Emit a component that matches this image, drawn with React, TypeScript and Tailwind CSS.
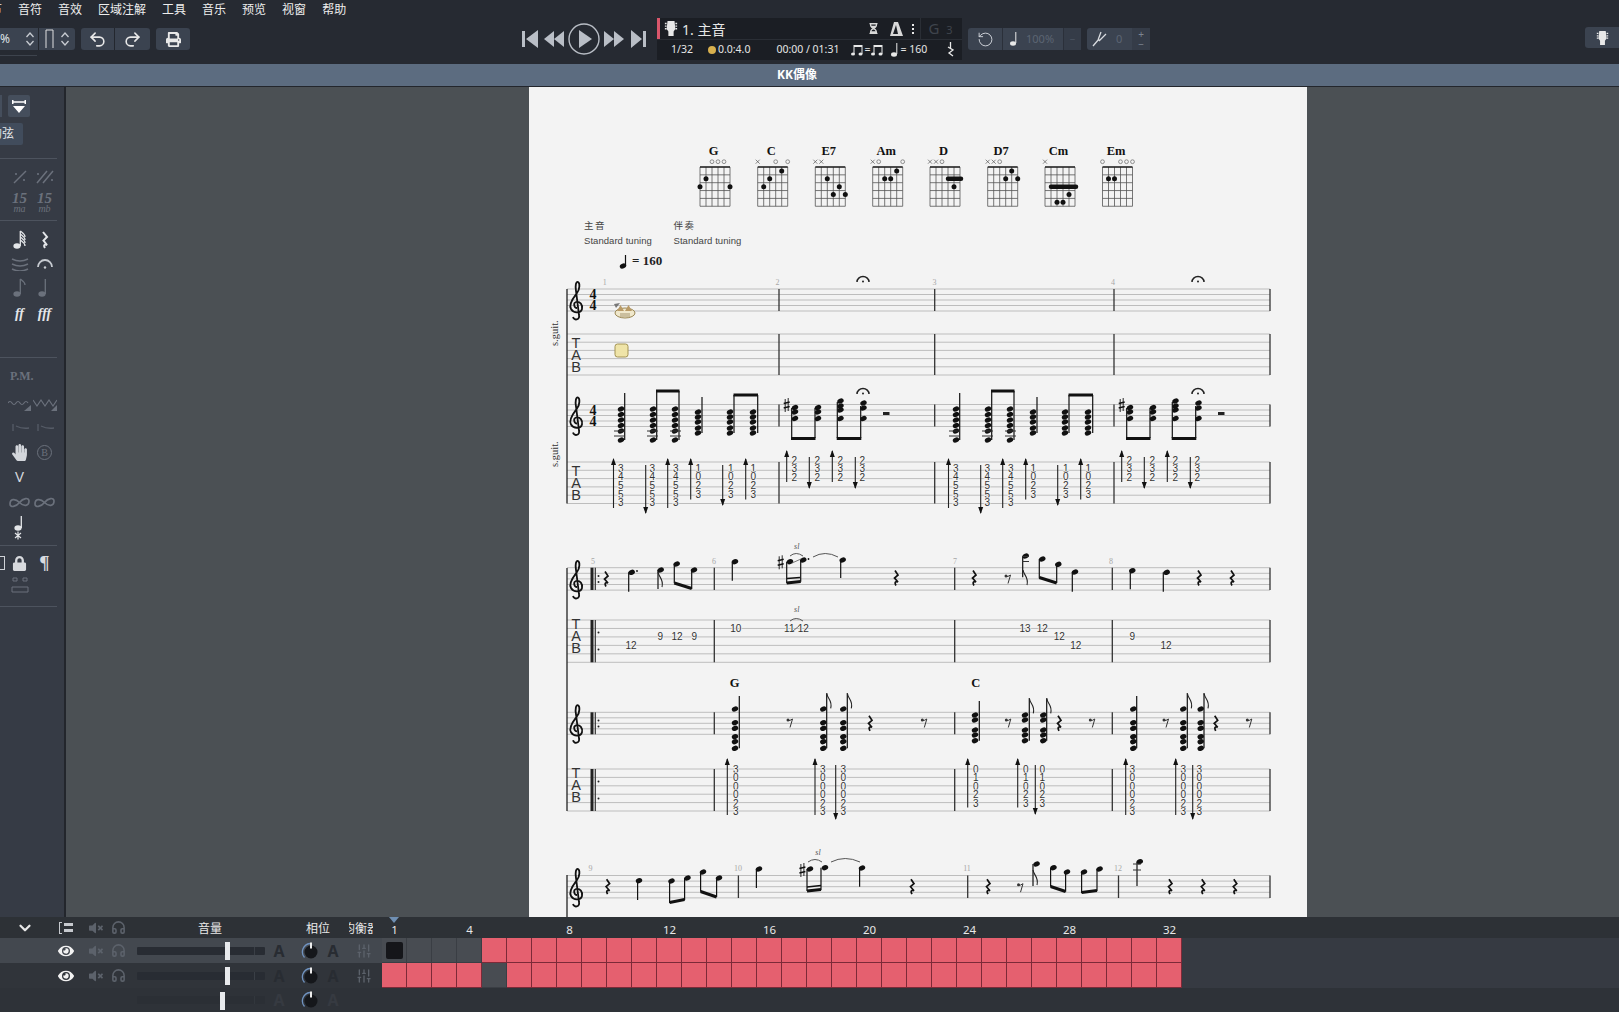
import { ChevronDown, Headphones, Redo2, RotateCcw, SlidersVertical, Undo2 } from "lucide-react";
import { FaEye, FaHandPaper, FaHourglassHalf, FaLock, FaPrint, FaVolumeMute } from "react-icons/fa";

const PAGE = "#f3f3f3";
const menus = ["小节", "音符", "音效", "区域注解", "工具", "音乐", "预览", "视窗", "帮助"];

function GuitarHead({ size = 16, color = "#e8e8e8" }: { size?: number; color?: string }) {
  return (
    <svg width={size} height={size + 3} viewBox="0 0 16 19" fill={color}>
      <path d="M4 1h8l1 9-2 3v5H5v-5l-2-3z" />
      <path d="M1 3h2v1.500H1zM1 6h2v1.500H1zM1 9h2v1.500H1zM13 3h2v1.500h-2zM13 6h2v1.500h-2zM13 9h2v1.500h-2z" />
    </svg>
  );
}

function Stepper() {
  return (
    <svg width="10" height="16" viewBox="0 0 10 16" fill="none" stroke="#c8ccd2" strokeWidth="1.300">
      <path d="M1.500 6L5 2l3.500 4M1.500 10L5 14l3.500-4" />
    </svg>
  );
}

function Transport() {
  const c = "#b9bec6";
  return (
    <div className="flex items-center">
      <svg width="16" height="18" viewBox="0 0 16 18" fill={c}>
        <path d="M0 1h3v16H0zM16 0v18L4 9z" />
      </svg>
      <svg className="ml-[6px]" width="20" height="16" viewBox="0 0 20 16" fill={c}>
        <path d="M10 0v16L0 8zM20 0v16L10 8z" />
      </svg>
      <svg className="ml-[4px]" width="32" height="32" viewBox="0 0 32 32">
        <circle cx="16" cy="16" r="15" fill="none" stroke={c} strokeWidth="1.400" />
        <path d="M11 7l13 9-13 9z" fill={c} />
      </svg>
      <svg className="ml-[4px]" width="20" height="16" viewBox="0 0 20 16" fill={c}>
        <path d="M0 0v16L10 8zM10 0v16L20 8z" />
      </svg>
      <svg className="ml-[7px]" width="15" height="18" viewBox="0 0 15 18" fill={c}>
        <path d="M0 0v18L11 9zM12 1h3v16h-3z" />
      </svg>
    </div>
  );
}

function MiniNote({ up = true, color = "#e8e8e8" }: { up?: boolean; color?: string }) {
  return (
    <svg width="8" height="14" viewBox="0 0 8 14" fill={color}>
      <ellipse cx="3" cy={up ? 11.500 : 3} rx="3" ry="2.200" />
      <rect x="5.300" y="0" width="1" height="11" />
    </svg>
  );
}

function BeamNotes() {
  return (
    <svg width="12" height="12" viewBox="0 0 12 12" fill="#e8e8e8">
      <path d="M2.500 1h9v2h-8v7h-1zM10.500 2h1v8h-1z" />
      <ellipse cx="2" cy="10" rx="2" ry="1.600" />
      <ellipse cx="9.500" cy="10" rx="2" ry="1.600" />
    </svg>
  );
}

function InfoPanel() {
  return (
    <div className="flex h-[42px] w-[305px] flex-col bg-[#1b1e24] text-[#e6e6e6]">
      <div className="flex h-[22px] items-center border-b border-[#2a2e35]">
        <div className="h-full w-[3px] bg-[#d9566b]" />
        <div className="ml-[4px]">
          <GuitarHead size={14} />
        </div>
        <span className="ml-[4px] pt-[2px] text-[14px]">1. 主音</span>
        <span className="ml-[143px] text-[#d8d8d8]">
          <FaHourglassHalf size={11} />
        </span>
        <svg className="ml-[11px]" width="13" height="14" viewBox="0 0 13 14" fill="#d8d8d8">
          <path d="M4 0h4l5 14H0zM3 12h5L6 3z" fillRule="evenodd" />
        </svg>
        <div className="ml-[9px] flex flex-col gap-[2px]">
          <div className="size-[2px] bg-[#e8e8e8]" />
          <div className="size-[2px] bg-[#e8e8e8]" />
          <div className="size-[2px] bg-[#e8e8e8]" />
        </div>
        <div className="ml-[6px] h-full w-px bg-[#2a2e35]" />
        <span className="ml-[7px] text-[15px] tracking-[2px] text-[#3f444c]">
          G<span className="text-[11px]"> 3</span>
        </span>
      </div>
      <div className="flex h-[20px] items-center text-[10.500px]">
        <span className="ml-[14px]">1/32</span>
        <div className="ml-[15px] size-[8px] rounded-full bg-[#d8b04e]" />
        <span className="ml-[2px]">0.0:4.0</span>
        <span className="ml-[26px]">00:00 / 01:31</span>
        <div className="ml-[12px]">
          <BeamNotes />
        </div>
        <span className="mx-[1px]">=</span>
        <BeamNotes />
        <div className="ml-[8px]">
          <MiniNote />
        </div>
        <span className="ml-[1px]">= 160</span>
        <svg className="ml-[20px]" width="7" height="16" viewBox="0 0 7 16" fill="none" stroke="#e8e8e8">
          <path d="M3.500 0v6M1 5l5 3-4 3 4 3" strokeWidth="1.300" />
        </svg>
      </div>
    </div>
  );
}

function Toolbar() {
  return (
    <div className="mt-[9px] flex">
      <div className="flex h-[22px] w-[75px] items-center rounded-r-[3px] bg-[#3b4350] text-[12px] text-[#dfe2e6]">
        <span className="w-[10px] shrink-0">%</span>
        <div className="ml-[15px]">
          <Stepper />
        </div>
        <div className="ml-[3px] h-full w-px bg-[#23272e]" />
        <svg className="ml-[6px]" width="9" height="20" viewBox="0 0 9 20" fill="none" stroke="#e0e0e0">
          <path d="M1 19V1h7v18" />
        </svg>
        <div className="ml-[6px]">
          <Stepper />
        </div>
      </div>
      <div className="ml-[6px] flex h-[22px] w-[69px] items-center rounded-[3px] bg-[#3b4350] text-[#e8e8e8]">
        <div className="flex h-full w-[34px] items-center justify-center border-r border-[#23272e]">
          <Undo2 size={19} strokeWidth={2} />
        </div>
        <div className="flex h-full flex-1 items-center justify-center">
          <Redo2 size={19} strokeWidth={2} />
        </div>
      </div>
      <div className="ml-[6px] flex h-[22px] w-[34px] items-center justify-center rounded-[3px] bg-[#3b4350] text-[#e8e8e8]">
        <FaPrint size={15} />
      </div>
    </div>
  );
}

function Header() {
  return (
    <div className="flex h-[64px] bg-[#262a32] text-white">
      <div className="flex w-[522px] shrink-0 flex-col">
        <div className="-ml-[22px] flex h-[19px] items-center gap-4 text-[12px] text-[#eeeeee]">
          {menus.map((m) => (
            <span key={m}>{m}</span>
          ))}
        </div>
        <Toolbar />
        <div className="mt-[5px] h-px w-[37px] bg-[#3d434d]" />
      </div>
      <div className="mt-[18px] flex h-[42px] flex-1 items-center">
        <Transport />
        <div className="ml-[11px]">
          <InfoPanel />
        </div>
        <div className="ml-[6px] flex h-[22px] w-[113px] items-center rounded-[3px] bg-[#3b4350]">
          <div className="flex h-full w-[35px] items-center justify-center border-r border-[#2b303a] text-[#d4d8de]">
            <RotateCcw size={17} strokeWidth={1.300} />
          </div>
          <div className="ml-[7px]">
            <MiniNote />
          </div>
          <span className="ml-[8px] text-[11px] text-[#5c6573]">100%</span>
          <div className="ml-[9px] flex h-full flex-1 items-center justify-center border-l border-[#2b303a] bg-[#353c48] text-[10px] text-[#4e5663]">
            −
          </div>
        </div>
        <div className="ml-[6px] flex h-[22px] w-[63px] items-center rounded-[3px] bg-[#3b4350]">
          <svg className="ml-[5px]" width="15" height="16" viewBox="0 0 15 16" fill="none" stroke="#d9dce0" strokeWidth="1.300">
            <path d="M1 15l6-7M6 9L9 1M7 10l7-7" />
          </svg>
          <span className="ml-[9px] text-[11px] text-[#5c6573]">0</span>
          <div className="ml-[10px] flex h-full flex-1 flex-col items-center justify-center bg-[#353c48] text-[10px] leading-[10px] text-[#7d8591]">
            <span>+</span>
            <span>−</span>
          </div>
        </div>
        <div className="ml-auto -mt-[3px] flex h-[21px] w-[34px] items-center justify-center rounded-l-[3px] bg-[#3b4350]">
          <GuitarHead size={13} />
        </div>
      </div>
    </div>
  );
}

function SideRow({ h = 24, mt = 0, children }: { h?: number; mt?: number; children: React.ReactNode }) {
  return (
    <div className="-ml-[18px] flex items-center" style={{ height: h, marginTop: mt }}>
      {children}
    </div>
  );
}

function Cell({ children, className = "" }: { children?: React.ReactNode; className?: string }) {
  return <div className={`flex w-[25px] shrink-0 items-center justify-center ${className}`}>{children}</div>;
}

function Sep({ mt }: { mt: number }) {
  return <div className="h-px w-[57px] shrink-0 bg-[#4d535e]" style={{ marginTop: mt }} />;
}

const dim = "#6b717c";

function NoteGlyph({ color = "#e4e6e9", flags = 0 }: { color?: string; flags?: number }) {
  return (
    <svg width="14" height="20" viewBox="0 0 14 20" fill={color} stroke={color}>
      <ellipse cx="4" cy="16" rx="3.600" ry="2.700" stroke="none" />
      <path d="M7.300 16V1" strokeWidth="1.300" />
      {Array.from({ length: flags }).map((_, i) => (
        <path key={i} d={`M7.300 ${1 + i * 3}C10 ${3 + i * 3} 12 ${4 + i * 3} 12 ${7 + i * 3}`} fill="none" strokeWidth="1.300" />
      ))}
    </svg>
  );
}

function StarNote() {
  return (
    <svg width="14" height="24" viewBox="0 0 14 24" fill="#e4e6e9" stroke="#e4e6e9">
      <ellipse cx="5" cy="12" rx="3.600" ry="2.700" stroke="none" />
      <path d="M8.300 12V0" strokeWidth="1.300" />
      <path d="M2 17l6 5M8 17l-6 5M5 15.500v8" fill="none" strokeWidth="1.200" />
    </svg>
  );
}

function RestGlyph({ color = "#e4e6e9" }: { color?: string }) {
  return (
    <svg width="8" height="18" viewBox="0 0 8 18" fill="none" stroke={color} strokeWidth="2">
      <path d="M2 1l4 5-3.500 3.500L6 14c-2-1-4 0-2 3" />
    </svg>
  );
}

function Loops() {
  return (
    <svg width="21" height="11" viewBox="0 0 21 11" fill="none" stroke={dim} strokeWidth="1.700">
      <path d="M1 7C1 2 6 1 10.500 5.500S20 9 20 4" />
      <path d="M1 7c0 4 6 3 9.500-1.500S20 0 20 4" />
    </svg>
  );
}

function Sidebar() {
  return (
    <div className="flex w-[66px] shrink-0 flex-col overflow-hidden border-r-2 border-[#23262c] bg-[#363b45] text-[#e4e6e9]">
      <div className="mt-[8px] flex h-[22px]">
        <div className="h-full w-[2px] bg-[#454e5c]" />
        <div className="ml-[6px] flex h-full w-[22px] items-center justify-center rounded-[2px] bg-[#454e5c]">
          <svg width="16" height="15" viewBox="0 0 16 15" fill="white">
            <path d="M1 1h1.500v4H1zM13.500 1H15v4h-1.500zM2.500 2.300h11v1.400h-11zM2 7h12l-6 7z" />
          </svg>
        </div>
      </div>
      <div className="mt-[6px] flex h-[22px] w-[23px] items-center justify-end overflow-hidden rounded-r-[2px] bg-[#414c5c] pr-[9px] text-[12px]">
        <span className="shrink-0">的弦</span>
      </div>
      <Sep mt={13} />
      <SideRow h={20} mt={8}>
        <Cell />
        <Cell>
          <svg width="18" height="14" viewBox="0 0 18 14" fill={dim} stroke={dim}>
            <path d="M3 13L15 1" strokeWidth="1.500" />
            <circle cx="5" cy="4" r="1.100" stroke="none" />
            <circle cx="13" cy="10" r="1.100" stroke="none" />
          </svg>
        </Cell>
        <Cell>
          <svg width="22" height="14" viewBox="0 0 22 14" fill={dim} stroke={dim}>
            <path d="M3 13L13 1M9 13L19 1" strokeWidth="1.500" />
            <circle cx="4" cy="4" r="1.100" stroke="none" />
            <circle cx="18" cy="10" r="1.100" stroke="none" />
          </svg>
        </Cell>
      </SideRow>
      <SideRow h={22} mt={4}>
        <Cell />
        {["ma", "mb"].map((t) => (
          <Cell key={t} className="flex-col font-['Liberation_Serif',serif] text-[#6b717c] italic">
            <span className="text-[15px] leading-[12px] font-bold">15</span>
            <span className="text-[10px] leading-[9px]">{t}</span>
          </Cell>
        ))}
      </SideRow>
      <Sep mt={7} />
      <SideRow mt={7}>
        <Cell />
        <Cell>
          <NoteGlyph flags={4} />
        </Cell>
        <Cell>
          <RestGlyph />
        </Cell>
      </SideRow>
      <SideRow>
        <Cell />
        <Cell>
          <svg width="18" height="14" viewBox="0 0 18 14" fill="none" stroke={dim} strokeWidth="1.400">
            <path d="M1 2q8 4 16 0M1 7q8 4 16 0M1 12q8 4 16 0" />
          </svg>
        </Cell>
        <Cell>
          <svg width="18" height="12" viewBox="0 0 18 12" fill="none" stroke="#c6cad0" strokeWidth="1.800">
            <path d="M2 9a7 7 0 0 1 14 0" />
            <circle cx="9" cy="9.500" r="1.200" fill="#c6cad0" stroke="none" />
          </svg>
        </Cell>
      </SideRow>
      <SideRow>
        <Cell />
        <Cell>
          <NoteGlyph color={dim} flags={1} />
        </Cell>
        <Cell>
          <NoteGlyph color={dim} />
        </Cell>
      </SideRow>
      <SideRow mt={1}>
        <Cell />
        <Cell className="font-['Liberation_Serif',serif] text-[14px] font-bold italic">ff</Cell>
        <Cell className="font-['Liberation_Serif',serif] text-[14px] font-bold italic">fff</Cell>
      </SideRow>
      <Sep mt={32} />
      <SideRow h={20} mt={8}>
        <div className="ml-[28px] font-['Liberation_Serif',serif] text-[12px] font-bold text-[#6b717c]">P.M.</div>
      </SideRow>
      <SideRow mt={7}>
        <Cell />
        <Cell>
          <svg width="24" height="14" viewBox="0 0 24 14" fill="none" stroke={dim} strokeWidth="1.200">
            <path d="M0 5q2-3 4 0t4 0 4 0 4 0 4 0" />
            <path d="M16 13h7V7z" fill={dim} stroke="none" />
          </svg>
        </Cell>
        <Cell>
          <svg width="24" height="14" viewBox="0 0 24 14" fill="none" stroke={dim} strokeWidth="1.200">
            <path d="M0 2l4 6 4-6 4 6 4-6 4 6 4-6" />
            <path d="M18 13h6V7z" fill={dim} stroke="none" />
          </svg>
        </Cell>
      </SideRow>
      <SideRow mt={-1}>
        <Cell />
        {[0, 1].map((i) => (
          <Cell key={i}>
            <svg width="20" height="10" viewBox="0 0 20 10" fill="none" stroke="#565c67" strokeWidth="1.300">
              <path d="M3 1v7M6 3q6 3 13 2" />
            </svg>
          </Cell>
        ))}
      </SideRow>
      <SideRow>
        <Cell />
        <Cell className="text-[#d3d6db]">
          <FaHandPaper size={17} />
        </Cell>
        <Cell>
          <div className="flex size-[15px] items-center justify-center rounded-full border border-[#6b717c] font-['Liberation_Serif',serif] text-[10px] text-[#6b717c]">
            B
          </div>
        </Cell>
      </SideRow>
      <SideRow>
        <Cell />
        <Cell className="text-[15px] text-[#d3d6db]">V</Cell>
        <Cell />
      </SideRow>
      <SideRow mt={2}>
        <Cell />
        <Cell>
          <Loops />
        </Cell>
        <Cell>
          <Loops />
        </Cell>
      </SideRow>
      <SideRow mt={2}>
        <Cell />
        <Cell>
          <StarNote />
        </Cell>
        <Cell />
      </SideRow>
      <Sep mt={5} />
      <SideRow mt={5}>
        <Cell>
          <div className="ml-[14px] h-[14px] w-[7px] border border-[#cfd2d7]" />
        </Cell>
        <Cell className="text-[#d8dade]">
          <FaLock size={15} />
        </Cell>
        <Cell className="font-['Liberation_Serif',serif] text-[19px] font-bold text-[#d8dade]">¶</Cell>
      </SideRow>
      <SideRow h={20}>
        <Cell />
        <Cell>
          <svg width="18" height="16" viewBox="0 0 18 16" fill="none" stroke={dim}>
            <path d="M2 1h4v3H2zM12 1h4v3h-4zM1 10h16M1 15h16M1 10v5M17 10v5" />
          </svg>
        </Cell>
        <Cell />
      </SideRow>
      <Sep mt={11} />
    </div>
  );
}

/* ---------- score drawing ---------- */

function Clef({ x, y }: { x: number; y: number }) {
  return (
    <g transform={`translate(${x} ${y})`} fill="none" stroke="#111" strokeWidth="1.800">
      <path d="M1 8C-2 8-3 3 0 2 4 1 7 5 6 9 5 13-2 14-5 9-8 4-2-3 1-7 4-11 4-17 2-18 0-19-1-14 0-9L3 15C4 20-2 21-3 17" />
    </g>
  );
}

function Lines({ top, step, n, x1 = 567, x2 = 1270 }: { top: number; step: number; n: number; x1?: number; x2?: number }) {
  return (
    <g stroke="#bdbdbd" strokeWidth="1">
      {Array.from({ length: n }).map((_, i) => (
        <line key={i} x1={x1} x2={x2} y1={top + i * step} y2={top + i * step} />
      ))}
    </g>
  );
}

function Bars({ xs, y1, y2 }: { xs: number[]; y1: number; y2: number }) {
  return (
    <g stroke="#333" strokeWidth="1.300">
      {xs.map((x) => (
        <line key={x} x1={x} x2={x} y1={y1} y2={y2} />
      ))}
    </g>
  );
}

function TabLetters({ top }: { top: number }) {
  return (
    <g fontFamily="Liberation Sans" fontSize="14.500" fill="#333" textAnchor="middle">
      <text x="576" y={top + 14}>T</text>
      <text x="576" y={top + 26}>A</text>
      <text x="576" y={top + 37.500}>B</text>
    </g>
  );
}

function TimeSig({ y }: { y: number }) {
  return (
    <g fontFamily="Liberation Serif" fontSize="14" fontWeight="bold" fill="#111" textAnchor="middle">
      <text x="593" y={y - 1}>4</text>
      <text x="593" y={y + 10}>4</text>
    </g>
  );
}

function BarNum({ x, y, n }: { x: number; y: number; n: number }) {
  return (
    <text x={x} y={y} fontFamily="Liberation Serif" fontSize="8" fill="#a8a8a8" textAnchor="middle">
      {n}
    </text>
  );
}

function Head({ x, y }: { x: number; y: number }) {
  return <ellipse cx={x} cy={y} rx="3.300" ry="2.500" fill="#111" transform={`rotate(-20 ${x} ${y})`} />;
}

function Rest({ x, y }: { x: number; y: number }) {
  return (
    <path
      transform={`translate(${x} ${y})`}
      d="M-1-7.500L2-3-1.500 0 2 4C0 3-2 4 0 7.500"
      fill="none"
      stroke="#111"
      strokeWidth="1.700"
    />
  );
}

function Rest8({ x, y }: { x: number; y: number }) {
  return (
    <g transform={`translate(${x} ${y})`}>
      <circle cx="-2" cy="-3" r="1.500" fill="#333" />
      <path d="M-2.500-2.500Q0-2 2.500-4L0 4.500" fill="none" stroke="#333" strokeWidth="1" />
    </g>
  );
}

function Fermata({ x, y }: { x: number; y: number }) {
  return (
    <g transform={`translate(${x} ${y})`}>
      <path d="M-6 2A6 5.500 0 0 1 6 2" fill="none" stroke="#222" strokeWidth="1.500" />
      <circle cx="0" cy="1.500" r="1" fill="#222" />
    </g>
  );
}

function Sharp({ x, y }: { x: number; y: number }) {
  return (
    <g transform={`translate(${x} ${y})`} stroke="#111">
      <path d="M-1.500-6V7M1.500-7V6" strokeWidth="0.900" />
      <path d="M-3-1.500L3-3M-3 3L3 1.500" strokeWidth="1.600" />
    </g>
  );
}

function Flag({ x, y }: { x: number; y: number }) {
  return <path d={`M${x} ${y}C${x + 1} ${y + 6} ${x + 6} ${y + 7} ${x + 4} ${y + 15}`} fill="none" stroke="#222" strokeWidth="1.100" />;
}

function Stem({ x, y1, y2 }: { x: number; y1: number; y2: number }) {
  return <line x1={x} x2={x} y1={y1} y2={y2} stroke="#111" strokeWidth="1.200" />;
}

function Beam({ x1, y1, x2, y2 }: { x1: number; y1: number; x2: number; y2: number }) {
  return <line x1={x1} x2={x2} y1={y1} y2={y2} stroke="#111" strokeWidth="3" />;
}

// head x, head y, stem x, stem end
type Mel = [number, number, number, number];

function Melody({ notes }: { notes: Mel[] }) {
  return (
    <>
      {notes.map(([hx, hy, sx, sy]) => (
        <g key={`${hx}-${hy}`}>
          <Stem x={sx} y1={hy} y2={sy} />
          <Head x={hx} y={hy} />
        </g>
      ))}
    </>
  );
}

function Strum({ x, y1, y2, up }: { x: number; y1: number; y2: number; up: boolean }) {
  return (
    <g>
      <line x1={x} x2={x} y1={y1} y2={y2} stroke="#222" strokeWidth="1.100" />
      {up ? (
        <path d={`M${x - 2.500} ${y1 + 6}L${x} ${y1 - 1} ${x + 2.500} ${y1 + 6}z`} fill="#111" />
      ) : (
        <path d={`M${x - 2.500} ${y2 - 6}L${x} ${y2 + 1} ${x + 2.500} ${y2 - 6}z`} fill="#111" />
      )}
    </g>
  );
}

function Fret({ x, y, t }: { x: number; y: number; t: string }) {
  return (
    <text
      x={x}
      y={y + 3.500}
      fontFamily="Liberation Sans"
      fontSize="10"
      fill="#333"
      textAnchor="middle"
      stroke={PAGE}
      strokeWidth="1.500"
      paintOrder="stroke"
    >
      {t}
    </text>
  );
}

// strum x, y1, y2, up, number x, numbers
type StrumData = [number, number, number, boolean, number, string];

function Strums({ data, ys }: { data: StrumData[]; ys: number[] }) {
  return (
    <>
      {data.map(([x, y1, y2, up, nx, nums]) => (
        <g key={x}>
          <Strum x={x} y1={y1} y2={y2} up={up} />
          {nums.split("").map((t, i) => (
            <Fret key={i} x={nx} y={ys[i]} t={t} />
          ))}
        </g>
      ))}
    </>
  );
}

function ChordStack({ x, ys, sx, top }: { x: number; ys: number[]; sx: number; top: number }) {
  return (
    <>
      <Stem x={sx} y1={top} y2={ys[ys.length - 1]} />
      {ys.map((y) => (
        <Head key={y} x={x} y={y} />
      ))}
    </>
  );
}

const CHORD_A = [409, 414.500, 420, 425.500, 431, 440];
const CHORD_B = [412, 417, 422, 428, 433];
const STRUMS_1: StrumData[] = [
  [613.500, 459, 508, true, 620.700, "34553"],
  [645.700, 465, 513, false, 652.300, "34553"],
  [667.700, 459, 508, true, 675.700, "34553"],
  [690.700, 459, 499.500, true, 698.300, "1023"],
  [722.700, 465, 505, false, 730.700, "1023"],
  [745.700, 459, 499.500, true, 753.300, "1023"],
];
const STRUMS_2: StrumData[] = [
  [786.700, 451, 482, true, 794.300, "232"],
  [809.300, 457, 488, false, 817.300, "232"],
  [832.300, 451, 482, true, 840.300, "232"],
  [855.300, 457, 488, false, 862.300, "232"],
];

// measures 1 and 2 of the rhythm guitar, reused for 3 and 4
function RhythmPair() {
  return (
    <>
      <ChordStack x={621} ys={CHORD_A} sx={624.700} top={393} />
      <ChordStack x={653} ys={CHORD_A} sx={656.700} top={391} />
      <ChordStack x={675} ys={CHORD_A} sx={679} top={391} />
      <Beam x1={656} y1={391} x2={679.500} y2={391} />
      <ChordStack x={698} ys={CHORD_B} sx={702} top={397} />
      <ChordStack x={730} ys={CHORD_B} sx={734} top={395} />
      <ChordStack x={753} ys={CHORD_B} sx={757.700} top={395} />
      <Beam x1={733.500} y1={395} x2={758} y2={395} />
      <g stroke="#333" strokeWidth="1">
        <path d="M614 431h11M614 436h11M647 431h11M647 436h11M670 431h11M670 436h11" />
      </g>
      <Sharp x={786.700} y={405} />
      <Stem x={791.700} y1={408} y2={438} />
      <Stem x={815} y1={408} y2={438} />
      <Beam x1={791} y1={438.500} x2={815.500} y2={438.500} />
      {[407.500, 412, 418.500].map((y) => (
        <g key={y}>
          <Head x={795} y={y} />
          <Head x={818} y={y} />
        </g>
      ))}
      <Stem x={837.300} y1={402} y2={438} />
      <Stem x={860.700} y1={406} y2={438} />
      <Beam x1={836.700} y1={438.500} x2={861.300} y2={438.500} />
      {[401, 406, 410, 418.500].map((y) => (
        <Head key={y} x={840.500} y={y} />
      ))}
      {[403, 408, 418.500].map((y) => (
        <Head key={y} x={863.500} y={y} />
      ))}
      <Fermata x={863} y={392} />
      <rect x="883" y="412" width="6.500" height="3" fill="#222" />
      <Strums data={STRUMS_1} ys={[468, 476.500, 485, 494, 502.500]} />
      <Strums data={STRUMS_2} ys={[460, 468.500, 477]} />
    </>
  );
}

function System1() {
  return (
    <>
      <Lines top={289} step={5.500} n={5} />
      <Lines top={334} step={8.200} n={6} />
      <Lines top={404.500} step={5.500} n={5} />
      <Lines top={462} step={8.300} n={6} />
      <line x1="567" x2="567" y1="289" y2="503.500" stroke="#222" strokeWidth="1.300" />
      {[
        [289, 311],
        [334, 375],
        [404.500, 426.500],
        [462, 503.500],
      ].map(([a, b]) => (
        <Bars key={a} xs={[779, 934.700, 1114, 1270]} y1={a} y2={b} />
      ))}
      <Clef x={576} y={300} />
      <Clef x={576} y={415.500} />
      <TimeSig y={300} />
      <TimeSig y={415.500} />
      <TabLetters top={334} />
      <TabLetters top={462} />
      <text transform="translate(558 346) rotate(-90)" fontFamily="Liberation Serif" fontSize="10.500" fill="#333">s.guit.</text>
      <text transform="translate(558 467) rotate(-90)" fontFamily="Liberation Serif" fontSize="10.500" fill="#333">s.guit.</text>
      <BarNum x={604.700} y={285} n={1} />
      <BarNum x={777.500} y={285} n={2} />
      <BarNum x={934.500} y={285} n={3} />
      <BarNum x={1113} y={285} n={4} />
      <Fermata x={863} y={280} />
      <Fermata x={1198} y={280} />
      {/* cursor on the first beat */}
      <ellipse cx="625" cy="313" rx="10" ry="5" fill="#f0e8cc" stroke="#9a8754" />
      <path d="M617 311l3.500-6 3.500 6zM625 311l3.500-6 3.500 6z" fill="#b99a66" />
      <path d="M614 304l6-1-4 5z" fill="#777" />
      <path d="M620 314h10M620 316h10" stroke="#a59570" strokeWidth="1" />
      <rect x="615" y="344" width="13" height="13" rx="2.500" fill="#efe4a8" stroke="#a29252" />
      <RhythmPair />
      <g transform="translate(335 0)">
        <RhythmPair />
      </g>
    </>
  );
}

function Repeat({ y1, y2, dots }: { y1: number; y2: number; dots: number[] }) {
  return (
    <g>
      <rect x="590.500" y={y1} width="3" height={y2 - y1} fill="#222" />
      <rect x="594.700" y={y1} width="1.200" height={y2 - y1} fill="#333" />
      {dots.map((d) => (
        <circle key={d} cx="598.500" cy={d} r="1" fill="#222" />
      ))}
    </g>
  );
}

const S2_LEAD: Mel[] = [
  [631.700, 572.300, 628.700, 591.700],
  [660.700, 570, 658, 589],
  [676.700, 564, 674.300, 583.300],
  [694, 570, 691.700, 589],
  [735, 561.700, 732.300, 580.700],
  [790, 561.700, 786.700, 583.300],
  [803.300, 560, 800.700, 581.700],
  [842.700, 560, 840.700, 578],
  [1025.700, 556, 1022.700, 577.300],
  [1042.300, 559, 1039.300, 578.300],
  [1058.300, 564.300, 1056.700, 583],
  [1075, 572, 1072.300, 591.700],
  [1132.300, 570.700, 1130.300, 589.300],
  [1166.700, 572.300, 1163.300, 591.700],
];
const G_HEADS = [709, 722.700, 728.300, 736.700, 741.700, 748.300];
const C_HEADS = [715, 720, 730, 735, 740.700];
const G_NUMS = [769, 777.500, 786, 794.500, 803, 811.500];
const S2_STRUMS: StrumData[] = [
  [727.300, 759, 815, true, 735.700, "300023"],
  [815, 759, 815, true, 822.700, "300023"],
  [835.700, 765, 819, false, 843.300, "300023"],
  [967.700, 759, 807.500, true, 975.700, "01023"],
  [1017.700, 759, 807.500, true, 1025.700, "01023"],
  [1035.300, 765, 814, false, 1042.300, "01023"],
  [1125.700, 759, 815, true, 1132.300, "300023"],
  [1175.700, 759, 815, true, 1183.300, "300023"],
  [1192.700, 765, 819, false, 1199.300, "300023"],
];

function Sl({ x, y }: { x: number; y: number }) {
  return (
    <text x={x} y={y} fontFamily="Liberation Serif" fontStyle="italic" fontSize="8" fill="#555" textAnchor="middle">
      sl
    </text>
  );
}

function System2() {
  const bars = [714.300, 954.700, 1112.300, 1270];
  return (
    <>
      <Lines top={567.700} step={5.600} n={5} />
      <Lines top={620} step={8.460} n={6} />
      <Lines top={712.300} step={5.500} n={5} />
      <Lines top={769} step={8.400} n={6} />
      <line x1="567" x2="567" y1="568" y2="811" stroke="#222" strokeWidth="1.300" />
      <Bars xs={bars} y1={567.700} y2={590} />
      <Bars xs={bars} y1={620} y2={662.300} />
      <Bars xs={bars} y1={712.300} y2={734.300} />
      <Bars xs={bars} y1={769} y2={811} />
      <Repeat y1={567.700} y2={590} dots={[576, 582]} />
      <Repeat y1={620} y2={662.300} dots={[632.500, 649.500]} />
      <Repeat y1={712.300} y2={734.300} dots={[720.500, 726.500]} />
      <Repeat y1={769} y2={811} dots={[781.500, 798.500]} />
      <Clef x={576} y={579} />
      <Clef x={576} y={723.300} />
      <TabLetters top={615} />
      <TabLetters top={764} />
      <BarNum x={593} y={564} n={5} />
      <BarNum x={714} y={564} n={6} />
      <BarNum x={955} y={564} n={7} />
      <BarNum x={1111} y={564} n={8} />

      <Rest x={606} y={579} />
      <Melody notes={S2_LEAD} />
      <circle cx="637" cy="571" r="0.900" fill="#111" />
      <circle cx="808.500" cy="559" r="0.900" fill="#111" />
      <Flag x={658} y={572} />
      <Beam x1={674.300} y1={583} x2={691.700} y2={588.500} />
      <Sharp x={780.700} y={562.300} />
      <Beam x1={786.700} y1={583} x2={800.700} y2={581.500} />
      <line x1="787" y1="578.500" x2="800" y2="577.500" stroke="#111" strokeWidth="1.500" />
      <line x1="792" y1="563" x2="801" y2="559" stroke="#555" strokeWidth="0.800" />
      <path d="M790 556q6-5 13 0" fill="none" stroke="#555" />
      <path d="M813 557q12-7 25 0" fill="none" stroke="#555" />
      <Sl x={796.700} y={549} />
      <Rest x={896} y={578} />
      <Rest x={974} y={578} />
      <Rest8 x={1008} y={579} />
      <path d="M1022 556.500h7M1022 561.500h7" stroke="#333" />
      <Flag x={1023} y={570} />
      <Beam x1={1039.300} y1={577.500} x2={1056.700} y2={583} />
      <Rest x={1199} y={578} />
      <Rest x={1232} y={578} />

      <Fret x={631} y={645.700} t="12" />
      <Fret x={660.300} y={636.700} t="9" />
      <Fret x={677} y={636.700} t="12" />
      <Fret x={694.300} y={636.700} t="9" />
      <Fret x={735.700} y={628.300} t="10" />
      <Fret x={789.300} y={628.300} t="11" />
      <Fret x={803.300} y={628.300} t="12" />
      <line x1="793" y1="631" x2="799" y2="626" stroke="#555" strokeWidth="0.800" />
      <path d="M790 621q6-5 13 0" fill="none" stroke="#555" />
      <Sl x={796.700} y={612} />
      <Fret x={1025} y={628.300} t="13" />
      <Fret x={1042.300} y={628.300} t="12" />
      <Fret x={1059.300} y={636.700} t="12" />
      <Fret x={1075.700} y={645.700} t="12" />
      <Fret x={1132.300} y={636.700} t="9" />
      <Fret x={1166} y={645.700} t="12" />

      <g fontFamily="Liberation Serif" fontWeight="bold" fontSize="12.500" fill="#111" textAnchor="middle">
        <text x="734.700" y="687">G</text>
        <text x="975.700" y="687">C</text>
      </g>

      <ChordStack x={735} ys={G_HEADS} sx={739.300} top={696} />
      <Rest8 x={790} y={723} />
      <ChordStack x={823.300} ys={G_HEADS} sx={826.700} top={693.300} />
      <Flag x={826.700} y={693.300} />
      <ChordStack x={843.300} ys={G_HEADS} sx={847.300} top={693.300} />
      <Flag x={847.300} y={693.300} />
      <Rest x={870} y={723.300} />
      <Rest8 x={924.300} y={723} />
      <ChordStack x={975} ys={C_HEADS} sx={979.300} top={701} />
      <Rest8 x={1008.300} y={723} />
      <ChordStack x={1025} ys={C_HEADS} sx={1029.300} top={698.300} />
      <Flag x={1029.300} y={698.300} />
      <ChordStack x={1043.300} ys={C_HEADS} sx={1046.700} top={698.300} />
      <Flag x={1046.700} y={698.300} />
      <Rest x={1059} y={723.300} />
      <Rest8 x={1092.300} y={723} />
      <ChordStack x={1133.300} ys={G_HEADS} sx={1136.700} top={696} />
      <Rest8 x={1166} y={723} />
      <ChordStack x={1183.300} ys={G_HEADS} sx={1187.300} top={693.300} />
      <Flag x={1187.300} y={693.300} />
      <ChordStack x={1200.700} ys={G_HEADS} sx={1204} top={693.300} />
      <Flag x={1204} y={693.300} />
      <Rest x={1215.700} y={723.300} />
      <Rest8 x={1249.300} y={723} />
      <Strums data={S2_STRUMS} ys={G_NUMS} />
    </>
  );
}

const S3_LEAD: Mel[] = [
  [639, 880.700, 637.600, 900],
  [671.500, 881, 669.600, 903],
  [687.500, 878, 684.600, 900],
  [703, 872, 700.600, 891.700],
  [719, 878, 716.600, 897],
  [759, 869, 756.400, 888],
  [810, 869, 807, 891],
  [825, 867.700, 821, 890],
  [862, 868, 859.600, 886.700],
  [1036.600, 864, 1033, 886],
  [1053.500, 867.700, 1050.600, 886.700],
  [1067, 872, 1065.600, 891.700],
  [1084, 872, 1081.600, 893],
  [1099.600, 869, 1097, 891],
  [1139.800, 861.700, 1137, 886],
];

function System3() {
  return (
    <>
      <Lines top={875.500} step={5.600} n={5} />
      <line x1="567" x2="567" y1="875" y2="917" stroke="#222" strokeWidth="1.300" />
      <Bars xs={[738.400, 967.700, 1118.500, 1270]} y1={875.500} y2={898} />
      <Clef x={576} y={887} />
      <BarNum x={590.600} y={871} n={9} />
      <BarNum x={738} y={871} n={10} />
      <BarNum x={967} y={871} n={11} />
      <BarNum x={1118} y={871} n={12} />
      <Rest x={607.600} y={886.700} />
      <Melody notes={S3_LEAD} />
      <Beam x1={669.600} y1={902.500} x2={684.600} y2={899.500} />
      <Beam x1={700.600} y1={891.500} x2={716.600} y2={897} />
      <Sharp x={802.400} y={870} />
      <Beam x1={807} y1={891} x2={821} y2={889.500} />
      <line x1="807" y1="887" x2="821" y2="885.500" stroke="#111" strokeWidth="1.500" />
      <path d="M808 862q7-5 14 0" fill="none" stroke="#555" />
      <path d="M831 862q14-7 29 0" fill="none" stroke="#555" />
      <Sl x={818} y={855} />
      <Rest x={912} y={886.700} />
      <Rest x={988} y={886.700} />
      <Rest8 x={1020.500} y={887.700} />
      <Flag x={1033} y={870} />
      <Beam x1={1050.600} y1={886.500} x2={1065.600} y2={891.500} />
      <Beam x1={1081.600} y1={892.500} x2={1097} y2={890.500} />
      <path d="M1133 864h8M1133 870h8" stroke="#333" />
      <Rest x={1170} y={886.700} />
      <Rest x={1202.800} y={886.700} />
      <Rest x={1234.800} y={886.700} />
    </>
  );
}

type ChordDiagram = {
  name: string;
  x: number;
  marks: string;
  dots: [number, number][];
  barre?: [number, number, number];
};

const CHORDS: ChordDiagram[] = [
  { name: "G", x: 700, marks: "  OOO ", dots: [[0, 3], [1, 2], [5, 3]] },
  { name: "C", x: 757.700, marks: "X  O O", dots: [[1, 3], [2, 2], [4, 1]] },
  { name: "E7", x: 815.300, marks: "XX    ", dots: [[2, 2], [3, 4], [4, 3], [5, 4]] },
  { name: "Am", x: 872.700, marks: "XO   O", dots: [[2, 2], [3, 2], [4, 1]] },
  { name: "D", x: 930, marks: "XXO   ", dots: [[4, 3]], barre: [3, 5, 2] },
  { name: "D7", x: 987.700, marks: "XXO   ", dots: [[3, 2], [4, 1], [5, 2]] },
  { name: "Cm", x: 1045, marks: "X     ", dots: [[2, 5], [3, 5], [4, 4]], barre: [1, 5, 3] },
  { name: "Em", x: 1102.500, marks: "O  OOO", dots: [[1, 2], [2, 2]] },
];

function Chord({ c }: { c: ChordDiagram }) {
  const top = 167;
  const sx = 6;
  const fy = 7.850;
  const dotY = (f: number) => top + (f - 0.5) * fy;
  return (
    <g>
      <text x={c.x + 13.500} y={154.500} fontFamily="Liberation Serif" fontWeight="bold" fontSize="12.500" fill="#111" textAnchor="middle">
        {c.name}
      </text>
      <g stroke="#555" strokeWidth="0.800">
        {[0, 1, 2, 3, 4, 5].map((s) => (
          <line key={s} x1={c.x + s * sx} x2={c.x + s * sx} y1={top} y2={top + 5 * fy} />
        ))}
        {[1, 2, 3, 4, 5].map((f) => (
          <line key={f} x1={c.x} x2={c.x + 5 * sx} y1={top + f * fy} y2={top + f * fy} />
        ))}
      </g>
      <line x1={c.x} x2={c.x + 30} y1={top} y2={top} stroke="#222" strokeWidth="1.600" />
      {c.marks.split("").map((m, s) => {
        const mx = c.x + s * sx;
        if (m === "O") return <circle key={s} cx={mx} cy={161.700} r="1.900" fill="none" stroke="#666" strokeWidth="0.700" />;
        if (m === "X") return <path key={s} d={`M${mx - 2} 159.700l4 4m0-4l-4 4`} stroke="#555" strokeWidth="0.700" />;
        return null;
      })}
      {c.dots.map(([s, f]) => (
        <circle key={`${s}-${f}`} cx={c.x + s * sx} cy={dotY(f)} r="2.500" fill="#111" />
      ))}
      {c.barre && (
        <line
          x1={c.x + c.barre[0] * sx}
          x2={c.x + c.barre[1] * sx + 1}
          y1={dotY(c.barre[2])}
          y2={dotY(c.barre[2])}
          stroke="#111"
          strokeWidth="4.500"
          strokeLinecap="round"
        />
      )}
    </g>
  );
}

function Score() {
  return (
    <svg width="778" height="830" viewBox="529 87 778 830" className="block">
      {CHORDS.map((c) => (
        <Chord key={c.name} c={c} />
      ))}
      <g fontFamily="Noto Sans CJK SC" fontSize="9.500" fill="#444">
        <text x="584" y="229" letterSpacing="1.500">主音</text>
        <text x="673.500" y="229" letterSpacing="1.500">伴奏</text>
      </g>
      <g fontFamily="Liberation Sans" fontSize="9.500" fill="#444" letterSpacing="0.050">
        <text x="584" y="244">Standard tuning</text>
        <text x="673.500" y="244">Standard tuning</text>
      </g>
      <Stem x={625.500} y1={255} y2={266} />
      <Head x={623} y={266} />
      <text x="632" y="265" fontFamily="Liberation Serif" fontWeight="bold" fontSize="13" fill="#222">= 160</text>
      <System1 />
      <System2 />
      <System3 />
    </svg>
  );
}

/* ---------- track panel ---------- */

function Knob() {
  return (
    <svg width="20" height="20" viewBox="0 0 20 20">
      <circle cx="10" cy="11" r="6.500" fill="#15171b" />
      <path d="M3.500 16.500A8.500 8.500 0 0 1 9 2.500" fill="none" stroke="#7093c0" strokeWidth="1.300" />
      <path d="M10 1.500v6" stroke="#ececec" strokeWidth="2" />
    </svg>
  );
}

function TrackControls({ handle, faded = false, plain = false }: { handle: number; faded?: boolean; plain?: boolean }) {
  return (
    <div className="flex h-full items-center">
      <div className={`ml-[57px] flex w-[18px] justify-center text-[#f2f2f2] ${plain ? "invisible" : ""}`}>
        <FaEye size={16} />
      </div>
      <div className={`ml-[13px] flex w-[16px] justify-center text-[#5c626b] ${plain ? "invisible" : ""}`}>
        <FaVolumeMute size={14} />
      </div>
      <div className={`ml-[6px] flex w-[16px] justify-center text-[#5c626b] ${plain ? "invisible" : ""}`}>
        <Headphones size={15} strokeWidth={2.500} />
      </div>
      <div className={`relative ml-[11px] flex h-[8px] w-[128px] ${faded ? "opacity-40" : ""} rounded-[1px] bg-[#282c33]`}>
        <div className="absolute right-[10px] top-0 h-full w-px bg-[#3a3f46]" />
      </div>
      <div className="relative h-full w-0">
        <div className="absolute top-[4px] h-[18px] w-[5px] bg-[#e8eaed]" style={{ left: handle - 265 }} />
      </div>
      <span className={`ml-[7px] w-[14px] text-center text-[16px] font-bold ${plain ? "text-[#363a41]" : "text-[#282c32]"}`}>A</span>
      <div className="ml-[15px]">
        <Knob />
      </div>
      <span className={`ml-[5px] w-[14px] text-center text-[16px] font-bold ${plain ? "text-[#363a41]" : "text-[#282c32]"}`}>A</span>
      <div className={`ml-[16px] flex w-[16px] justify-center text-[#5c626b] ${plain ? "invisible" : ""}`}>
        <SlidersVertical size={16} strokeWidth={2} />
      </div>
    </div>
  );
}

const BARS = Array.from({ length: 32 }, (_, i) => i + 1);
const LABELLED = [1, 4, 8, 12, 16, 20, 24, 28, 32];

function TrackCells({ rests, current }: { rests: number[]; current?: number }) {
  return (
    <div className="flex">
      {BARS.map((b) => {
        const isRest = rests.includes(b);
        return (
          <div
            key={b}
            className={`flex h-[25px] w-[25px] items-center justify-center border-r border-b ${
              isRest ? "border-[#3a3e44] bg-[#484c52]" : "border-[#7c2a38] bg-[#e5606f]"
            }`}
          >
            {b === current && <div className="size-[17px] rounded-[2px] bg-[#15161a]" />}
          </div>
        );
      })}
    </div>
  );
}

function TrackPanel() {
  return (
    <div className="h-[95px] bg-[#2e3238] text-[#e8e8e8]">
      <div className="flex h-[21px] bg-[#2d3136] text-[12px]">
        <div className="flex w-[382px] shrink-0 items-center">
          <ChevronDown size={18} strokeWidth={3} className="ml-[16px]" />
          <svg className="ml-[24px]" width="16" height="14" viewBox="0 0 16 14" fill="#c6c9ce">
            <path d="M1 1h3v1H2v10h2v1H1zM6 2h9v3H6zM6 8h9v3H6z" />
          </svg>
          <div className="ml-[14px] flex w-[16px] justify-center text-[#5c626b]">
            <FaVolumeMute size={14} />
          </div>
          <div className="ml-[6px] flex w-[16px] justify-center text-[#5c626b]">
            <Headphones size={15} strokeWidth={2.500} />
          </div>
          <span className="ml-[72px] pt-[3px]">音量</span>
          <span className="ml-[84px] pt-[3px]">相位</span>
          <div className="ml-[19px] flex w-[24px] justify-center overflow-hidden pt-[3px]">
            <span className="shrink-0">均衡器</span>
          </div>
        </div>
        <div className="relative flex">
          <div className="absolute left-[7px] top-0 h-0 w-0 border-x-[5px] border-t-[6px] border-x-transparent border-t-[#6f8fb3]" />
          {BARS.map((b) => (
            <span key={b} className="flex w-[25px] items-center justify-center pt-[5px] text-[11.500px]">
              {LABELLED.includes(b) ? b : ""}
            </span>
          ))}
        </div>
      </div>
      <div className="flex h-[25px] bg-[#363a42]">
        <div className="w-[382px] shrink-0 bg-[#43484f]">
          <TrackControls handle={225} />
        </div>
        <TrackCells rests={[1, 2, 3, 4]} current={1} />
      </div>
      <div className="flex h-[25px] bg-[#363a42]">
        <div className="w-[382px] shrink-0 bg-[#30343a]">
          <TrackControls handle={225} />
        </div>
        <TrackCells rests={[5]} />
      </div>
      <div className="h-[24px]">
        <TrackControls handle={220} faded plain />
      </div>
    </div>
  );
}

export default function App() {
  return (
    <div className="flex h-[1012px] w-[1619px] flex-col overflow-hidden bg-[#4b5054] font-['Noto_Sans','Noto_Sans_CJK_SC',sans-serif]">
      <Header />
      <div className="flex h-[23px] items-center justify-center border-b border-[#23262c] bg-[#5c6c80] pr-[25px] text-[12px] font-bold text-white">
        KK偶像
      </div>
      <div className="flex h-[830px]">
        <Sidebar />
        <div className="ml-[463px] w-[778px] bg-[#f3f3f3]">
          <Score />
        </div>
      </div>
      <TrackPanel />
    </div>
  );
}
